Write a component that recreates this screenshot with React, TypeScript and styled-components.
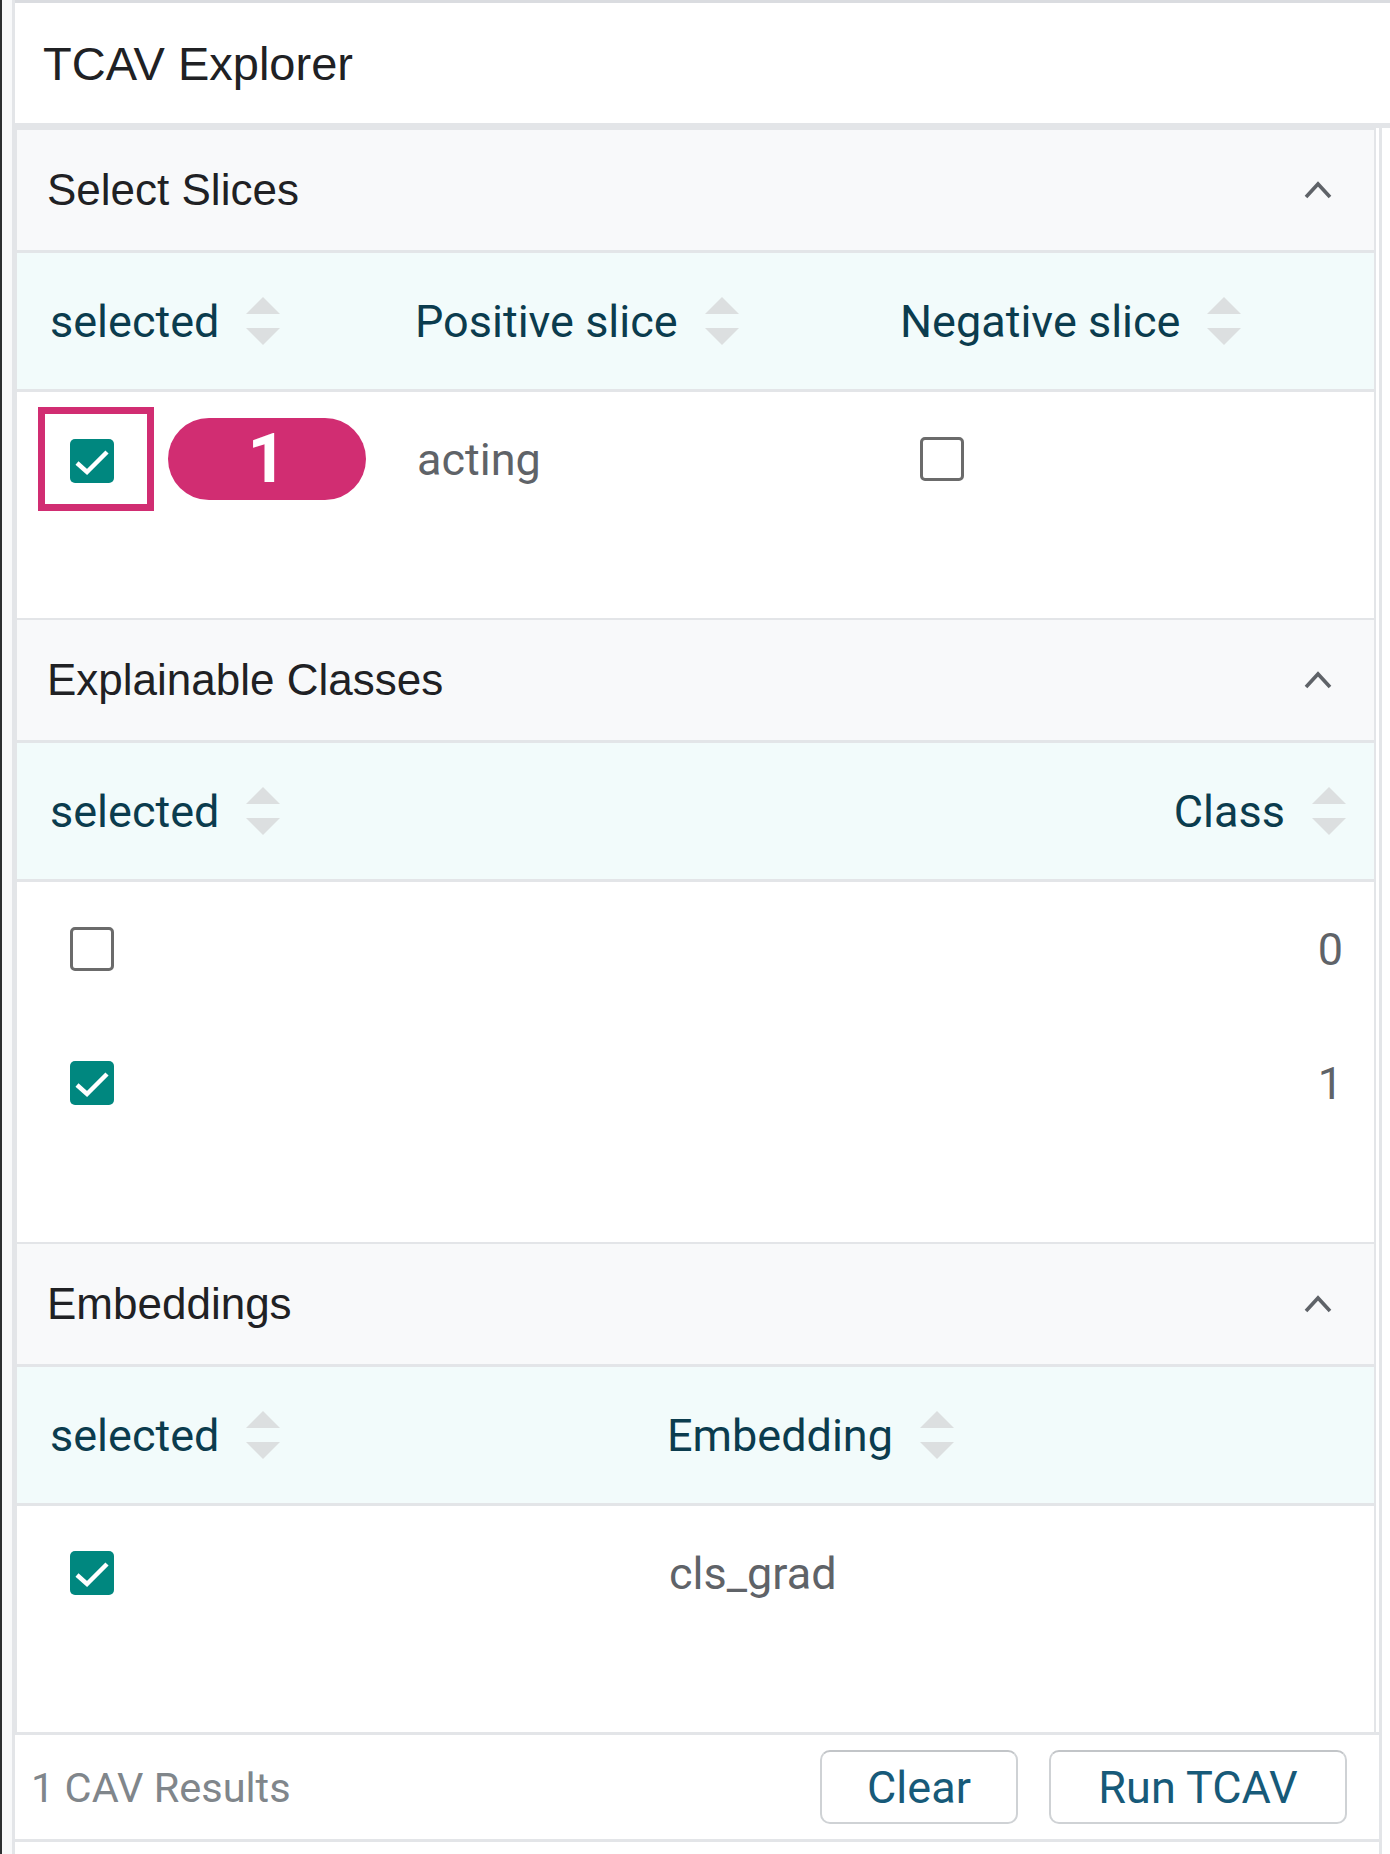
import React from 'react'
import styled, { createGlobalStyle } from 'styled-components'

const GlobalStyle = createGlobalStyle`
  html, body {
    margin: 0;
    padding: 0;
    background: #ffffff;
  }
  body {
    font-family: Roboto, "Liberation Sans", Arial, sans-serif;
  }
`

const c = {
  border: '#e3e5e8',
  sectionBg: '#f8f9fa',
  headBg: '#f2fbfb',
  headText: '#0b3c4e',
  bodyText: '#5f6368',
  teal: '#00877f',
  pink: '#d12d72',
  sortIcon: '#dcdfe0',
  button: '#175a79',
}

const Page = styled.div`
  width: 1390px;
  height: 1854px;
  box-sizing: border-box;
  border-left: 2px solid #2d2f31;
  padding-left: 10px;
  background: #f8f9fa;
  overflow: hidden;
`

const Module = styled.div`
  height: 100%;
  display: flex;
  flex-direction: column;
  border-left: 3px solid ${c.border};
  background: #ffffff;
`

const ModuleTitle = styled.div`
  height: 120px;
  border-top: 3px solid #dadce0;
  border-bottom: 5px solid ${c.border};
  display: flex;
  align-items: center;
  padding-left: 28px;
  font-family: "Liberation Sans", Arial, sans-serif;
  font-size: 47px;
  color: #202124;
`

const ModuleBody = styled.div`
  flex: 1;
  display: flex;
  flex-direction: column;
  margin-right: 8px;
  border-right: 3px solid ${c.border};
`

const Section = styled.section`
  border: 2px solid ${c.border};
  border-bottom: none;
  margin-right: 3px;
  padding-bottom: 92px;
`

const SectionHeader = styled.div`
  height: 120px;
  background: ${c.sectionBg};
  border-bottom: 3px solid ${c.border};
  display: flex;
  align-items: center;
  justify-content: space-between;
  padding: 0 42px 0 30px;
  font-family: "Liberation Sans", Arial, sans-serif;
  font-size: 44px;
  color: #202124;
`

const TableHead = styled.div<{ $cols: string }>`
  display: grid;
  grid-template-columns: ${(p) => p.$cols};
  align-items: center;
  height: 136px;
  background: ${c.headBg};
  border-bottom: 3px solid ${c.border};
`

const HeadCell = styled.div<{ $right?: boolean }>`
  display: flex;
  align-items: center;
  justify-content: ${(p) => (p.$right ? 'flex-end' : 'flex-start')};
  padding: 0 28px 0 33px;
  font-family: Roboto, "Liberation Sans", sans-serif;
  font-size: 45px;
  color: ${c.headText};
`

const Row = styled.div<{ $cols: string }>`
  display: grid;
  grid-template-columns: ${(p) => p.$cols};
  align-items: center;
  height: 134px;
`

const Cell = styled.div<{ $indent?: number; $right?: boolean }>`
  display: flex;
  align-items: center;
  justify-content: ${(p) => (p.$right ? 'flex-end' : 'flex-start')};
  padding-left: ${(p) => p.$indent ?? 35}px;
  padding-right: ${(p) => (p.$right ? 31 : 0)}px;
  font-family: Roboto, "Liberation Sans", sans-serif;
  font-size: 45px;
  color: ${c.bodyText};
`

const CheckBoxWrap = styled.div<{ $checked: boolean; $gap?: number }>`
  width: 44px;
  height: 44px;
  box-sizing: border-box;
  margin-left: ${(p) => p.$gap ?? 18}px;
  border-radius: 5px;
  display: flex;
  align-items: center;
  justify-content: center;
  background: ${(p) => (p.$checked ? c.teal : '#ffffff')};
  border: ${(p) => (p.$checked ? 'none' : '3.5px solid #6b6b6b')};
`

const Highlight = styled.div`
  box-sizing: border-box;
  width: 116px;
  height: 104px;
  border: 7px solid ${c.pink};
  padding: 25px 33px 21px 25px;
  display: flex;
`

const Pill = styled.div`
  width: 198px;
  height: 82px;
  margin-left: 14px;
  border-radius: 41px;
  background: ${c.pink};
  color: #ffffff;
  display: flex;
  align-items: center;
  justify-content: center;
  font-family: Roboto, "Liberation Sans", sans-serif;
  font-weight: 700;
  font-size: 68px;
`

const SortWrap = styled.span`
  display: inline-flex;
  margin-left: 27px;
`

const Footer = styled.div`
  height: 104px;
  border-top: 3px solid ${c.border};
  border-bottom: 3px solid ${c.border};
  display: flex;
  align-items: center;
  justify-content: space-between;
  padding: 0 32px 0 16px;
`

const ResultsText = styled.div`
  font-family: Roboto, "Liberation Sans", sans-serif;
  font-size: 41.5px;
  color: #80868b;
`

const Buttons = styled.div`
  display: flex;
  gap: 31px;
`

const Button = styled.button<{ $w: number }>`
  width: ${(p) => p.$w}px;
  height: 74px;
  box-sizing: border-box;
  border: 2.5px solid #cfd2d5;
  border-top-color: #c2c5c8;
  border-radius: 10px;
  background: #ffffff;
  color: ${c.button};
  font-family: Roboto, "Liberation Sans", sans-serif;
  font-size: 45px;
  padding: 0;
`

const SortIcon = () => (
  <SortWrap>
    <svg width="34" height="49" viewBox="0 0 34 49">
      <polygon points="17,0 34,17 0,17" fill={c.sortIcon} />
      <polygon points="0,31 34,31 17,48" fill={c.sortIcon} />
    </svg>
  </SortWrap>
)

const Chevron = () => (
  <svg width="28" height="18" viewBox="0 0 28 18">
    <polyline points="2,16 14,3 26,16" fill="none" stroke="#5f6368" strokeWidth="3.6" />
  </svg>
)

const CheckBox = ({ checked, gap }: { checked: boolean; gap?: number }) => (
  <CheckBoxWrap $checked={checked} $gap={gap}>
    {checked && (
      <svg width="44" height="44" viewBox="0 0 44 44">
        <polyline points="7,24 17,33 37,13" fill="none" stroke="#ffffff" strokeWidth="4.5" />
      </svg>
    )}
  </CheckBoxWrap>
)

const Head = ({ label, right }: { label: string; right?: boolean }) => (
  <HeadCell $right={right}>
    {label}
    <SortIcon />
  </HeadCell>
)

const sliceCols = '365px 485px 1fr'
const classCols = '1fr auto'
const embCols = '617px 1fr'

export default function App() {
  return (
    <>
      <GlobalStyle />
      <Page>
        <Module>
          <ModuleTitle>TCAV Explorer</ModuleTitle>
          <ModuleBody>
            <Section>
              <SectionHeader>
                Select Slices
                <Chevron />
              </SectionHeader>
              <TableHead $cols={sliceCols}>
                <Head label="selected" />
                <Head label="Positive slice" />
                <Head label="Negative slice" />
              </TableHead>
              <Row $cols={sliceCols}>
                <Cell $indent={21}>
                  <Highlight>
                    <CheckBox checked gap={0} />
                  </Highlight>
                  <Pill>1</Pill>
                </Cell>
                <Cell>acting</Cell>
                <Cell>
                  <CheckBox checked={false} gap={18} />
                </Cell>
              </Row>
            </Section>

            <Section>
              <SectionHeader>
                Explainable Classes
                <Chevron />
              </SectionHeader>
              <TableHead $cols={classCols}>
                <Head label="selected" />
                <Head label="Class" right />
              </TableHead>
              <Row $cols={classCols}>
                <Cell>
                  <CheckBox checked={false} />
                </Cell>
                <Cell $right>0</Cell>
              </Row>
              <Row $cols={classCols}>
                <Cell>
                  <CheckBox checked />
                </Cell>
                <Cell $right>1</Cell>
              </Row>
            </Section>

            <Section>
              <SectionHeader>
                Embeddings
                <Chevron />
              </SectionHeader>
              <TableHead $cols={embCols}>
                <Head label="selected" />
                <Head label="Embedding" />
              </TableHead>
              <Row $cols={embCols}>
                <Cell>
                  <CheckBox checked />
                </Cell>
                <Cell>cls_grad</Cell>
              </Row>
            </Section>

            <Footer>
              <ResultsText>1 CAV Results</ResultsText>
              <Buttons>
                <Button $w={198}>Clear</Button>
                <Button $w={298}>Run TCAV</Button>
              </Buttons>
            </Footer>
          </ModuleBody>
        </Module>
      </Page>
    </>
  )
}
